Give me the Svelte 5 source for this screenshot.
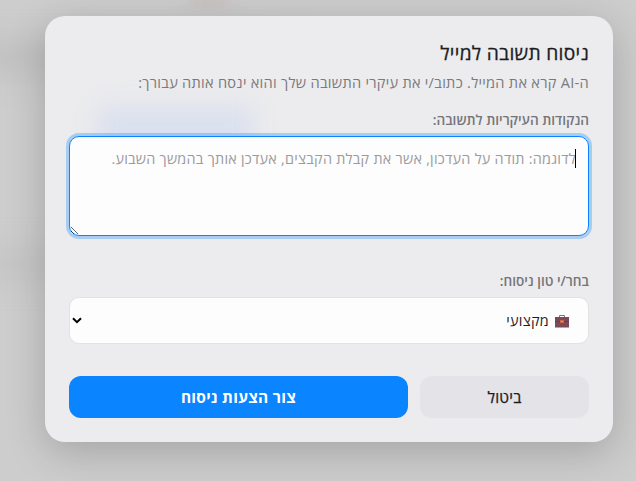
<script lang="ts">
  let points = $state('');
  let tone = $state('professional');

  const tones = [
    { id: 'professional', label: 'מקצועי' },
  ];
</script>

<div class="overlay" dir="rtl">
  <!-- Blurred page behind the dialog -->
  <div class="shade shade-top"></div>
  <div class="shade shade-middle"></div>
  <div class="shade shade-red"></div>

  <div class="modal" role="dialog" aria-labelledby="modal-title">
    <div class="tint"></div>

    <h2 id="modal-title">ניסוח תשובה למייל</h2>
    <p class="intro">ה-AI קרא את המייל. כתוב/י את עיקרי התשובה שלך והוא ינסח אותה עבורך:</p>

    <label for="points">הנקודות העיקריות לתשובה:</label>
    <div class="field points-field">
      <textarea
        id="points"
        bind:value={points}
        placeholder="לדוגמה: תודה על העדכון, אשר את קבלת הקבצים, אעדכן אותך בהמשך השבוע."
      ></textarea>
      <span class="caret"></span>
    </div>

    <label for="tone">בחר/י טון ניסוח:</label>
    <div class="field tone-field">
      <select id="tone" bind:value={tone}>
        {#each tones as item}
          <option value={item.id}>{item.label}</option>
        {/each}
      </select>
      <svg class="briefcase" width="14" height="13" viewBox="0 0 14 13">
        <path d="M4.5 2.5V.5h5v2" fill="none" stroke="#8d6873" stroke-width="1" />
        <rect x="0" y="2" width="14" height="10.5" fill="#7b4958" />
        <rect x="0" y="6" width="14" height="1" fill="#6a3e4c" />
        <rect x="5" y="5" width="4" height="3" fill="#c9653f" />
        <rect x="6" y="6" width="2" height="1" fill="#e89a5a" />
      </svg>
      <svg class="chevron" width="10" height="7" viewBox="0 0 10 7">
        <path d="M1 1.2 5 5.2 9 1.2" fill="none" stroke="#000" stroke-width="2" />
      </svg>
    </div>

    <div class="actions">
      <button class="btn cancel" type="button">ביטול</button>
      <button class="btn submit" type="button">צור הצעות ניסוח</button>
    </div>
  </div>
</div>

<style>
  :global(body) {
    margin: 0;
    overflow: hidden;
  }

  .overlay {
    position: relative;
    box-sizing: border-box;
    height: 100vh;
    padding: 16px 23px 39px 45px;
    overflow: hidden;
    background: #cdcdcd;
    font-family: 'Open Sans', 'Noto Sans', sans-serif;
  }

  .shade {
    position: absolute;
    filter: blur(14px);
  }

  .shade-top {
    top: 38px;
    left: -30px;
    width: 330px;
    height: 38px;
    background: #c1c1c1;
  }

  .shade-middle {
    top: 246px;
    left: -30px;
    width: 310px;
    height: 36px;
    background: #c5c5c5;
  }

  .shade-red {
    top: -14px;
    left: 190px;
    width: 38px;
    height: 20px;
    background: #c8bebe;
    filter: blur(8px);
  }

  .modal {
    position: relative;
    box-sizing: border-box;
    height: 426px;
    padding: 24px;
    border-radius: 20px;
    background: #ececee;
    box-shadow: 0 10px 40px rgba(0, 0, 0, 0.2);
  }

  .tint {
    position: absolute;
    top: 90px;
    left: 52px;
    width: 156px;
    height: 50px;
    background: #dae0ee;
    filter: blur(12px);
  }

  h2,
  .intro,
  label,
  .field,
  .actions {
    position: relative;
  }

  h2 {
    margin: 0;
    font-size: 19.2px;
    font-weight: 500;
    line-height: 25px;
    letter-spacing: 0.3px;
    color: #1d1d1f;
    -webkit-text-stroke: 0.3px #1d1d1f;
  }

  .intro {
    margin: 7px 0 18px;
    font-size: 14.6px;
    line-height: 20px;
    letter-spacing: 0.27px;
    white-space: nowrap;
    color: #7a7a7d;
  }

  label {
    display: block;
    margin-bottom: 7px;
    font-size: 13.6px;
    font-weight: 600;
    line-height: 19px;
    color: #757579;
  }

  .points-field {
    height: 100px;
    margin-bottom: 35px;
  }

  textarea,
  select {
    display: block;
    box-sizing: border-box;
    width: 100%;
    border: 1px solid #e2e2e4;
    border-radius: 10px;
    background: #fdfdfd;
    font-family: inherit;
    font-size: 14.4px;
    letter-spacing: 0.26px;
  }

  textarea {
    height: 100px;
    padding: 12px;
    border-color: #0a84ff;
    outline: none;
    box-shadow: 0 0 0 3px rgba(10, 132, 255, 0.3);
    line-height: 20px;
    resize: vertical;
  }

  textarea::placeholder {
    color: #9b9b9b;
    white-space: nowrap;
  }

  .caret {
    position: absolute;
    top: 13px;
    right: 13px;
    width: 1px;
    height: 19px;
    background: #000;
  }

  .tone-field {
    height: 47px;
    margin-bottom: 32px;
  }

  select {
    height: 47px;
    padding: 0 39px 0 24px;
    appearance: none;
    color: #1d1d1f;
  }

  .briefcase {
    position: absolute;
    top: 18px;
    right: 20px;
  }

  .chevron {
    position: absolute;
    top: 20px;
    left: 3px;
  }

  .actions {
    display: grid;
    grid-template-columns: 169px 1fr;
    gap: 12px;
  }

  .btn {
    height: 42px;
    padding: 0 0 1px;
    border: none;
    border-radius: 12px;
    font-family: inherit;
    font-size: 15.5px;
    letter-spacing: 0.25px;
  }

  .cancel {
    background: #e4e3e8;
    font-weight: 500;
    color: #1d1d1f;
    -webkit-text-stroke: 0.25px #1d1d1f;
  }

  .submit {
    background: #0a84ff;
    font-weight: 700;
    color: #fff;
  }
</style>
